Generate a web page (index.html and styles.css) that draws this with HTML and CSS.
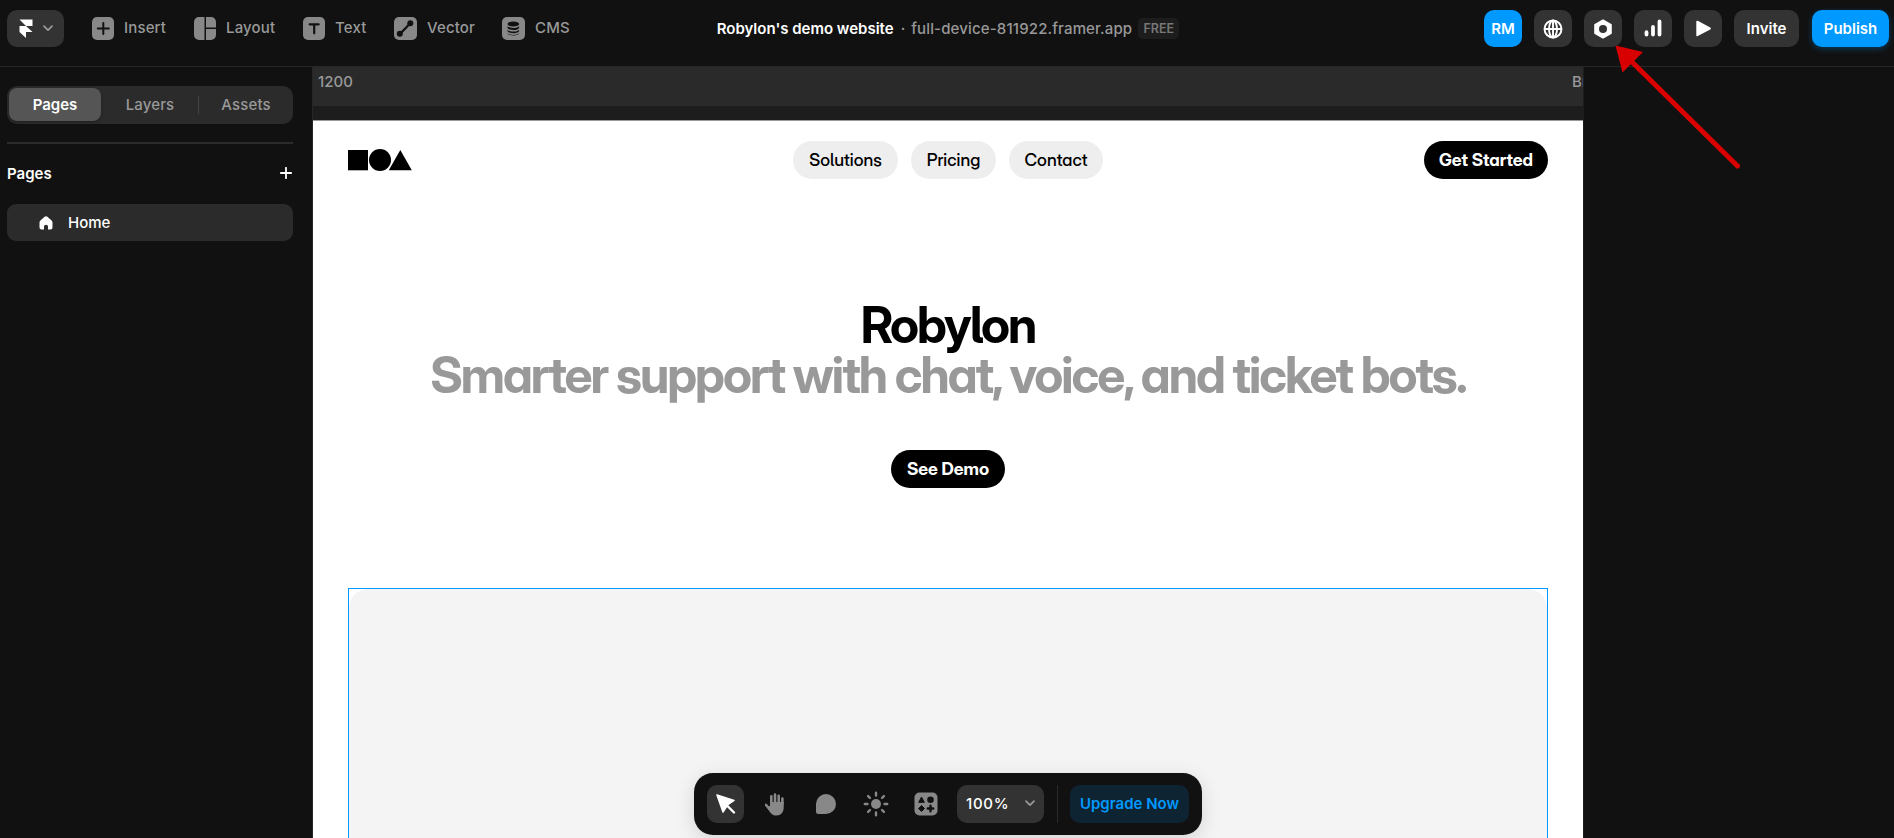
FILE: index.html
```
<!DOCTYPE html>
<html lang="en">
<head>
    <meta charset="UTF-8">
    <meta name="viewport" content="width=device-width, initial-scale=1.0">
    <title>Robylon's demo website</title>
    <link rel="stylesheet" href="styles.css">
</head>
<body>
    <header class="topbar">
        <div class="topbar-left">
            <div class="btn btn-logo">
                <svg width="14" height="20" viewBox="0 0 14 20"><path fill="#fff" d="M0.5 0.5H13.5V7H7zM0.5 7H7L13.5 13H0.5zM0.5 13H7V19z"/></svg>
                <svg width="10" height="7" viewBox="0 0 10 7"><path fill="none" stroke="#999" stroke-width="1.7" stroke-linecap="round" stroke-linejoin="round" d="M1 1.2L5 5.2L9 1.2"/></svg>
            </div>
            <nav class="menu">
                <a class="menu-item menu-insert">
                    <svg width="22" height="23" viewBox="0 0 22 23"><rect width="22" height="23" rx="5" fill="#888"/><path stroke="#111" stroke-width="2" stroke-linecap="round" d="M11.3 6V17M5.8 11.5H16.8"/></svg>
                    <span>Insert</span>
                </a>
                <a class="menu-item menu-layout">
                    <svg width="22" height="23" viewBox="0 0 22 23"><path fill="#888" d="M5 0H10.5V23H5a5 5 0 0 1-5-5V5a5 5 0 0 1 5-5zM12 0H17a5 5 0 0 1 5 5V10.5H12zM12 12H22V18a5 5 0 0 1-5 5H12z"/></svg>
                    <span>Layout</span>
                </a>
                <a class="menu-item menu-text">
                    <svg width="22" height="23" viewBox="0 0 22 23"><rect width="22" height="23" rx="5" fill="#888"/><path stroke="#111" stroke-width="2.2" stroke-linecap="round" d="M6.7 7.3H15.7M11.2 7.3V16.3"/></svg>
                    <span>Text</span>
                </a>
                <a class="menu-item menu-vector">
                    <svg width="23" height="23" viewBox="0 0 23 23"><rect width="23" height="23" rx="5" fill="#888"/><path stroke="#111" stroke-width="2.3" d="M6 17L16 6.5"/><circle cx="5.8" cy="16.8" r="3" fill="#111"/><circle cx="16.3" cy="6.3" r="3" fill="#111"/></svg>
                    <span>Vector</span>
                </a>
                <a class="menu-item menu-cms">
                    <svg width="23" height="23" viewBox="0 0 23 23"><rect width="23" height="23" rx="5" fill="#888"/><ellipse cx="11.3" cy="7" rx="5.8" ry="2.6" fill="#111"/><path fill="#111" d="M5.5 9c1.5 2.7 10.1 2.7 11.6 0v1.5c0 3.4-11.6 3.4-11.6 0zM5.5 12.7c1.5 2.5 10.1 2.5 11.6 0v1c0 3.3-11.6 3.3-11.6 0zM5.5 16c1.5 2.5 10.1 2.5 11.6 0c0 3.3-11.6 3.3-11.6 0z"/></svg>
                    <span>CMS</span>
                </a>
            </nav>
        </div>
        <div class="site-title">
            <span class="site-name">Robylon's demo website</span>
            <span class="dot">·</span>
            <span class="site-url">full-device-811922.framer.app</span>
            <span class="badge">FREE</span>
        </div>
        <div class="topbar-right">
            <div class="btn btn-icon btn-user">RM</div>
            <div class="btn btn-icon">
                <svg width="20" height="20" viewBox="0 0 20 20"><g fill="none" stroke="#fff" stroke-width="1.9"><circle cx="10" cy="10" r="8.5"/><ellipse cx="10" cy="10" rx="4" ry="8.5"/><path d="M10 1.5V18.5M1.5 10H18.5"/></g></svg>
            </div>
            <div class="btn btn-icon">
                <svg width="20" height="20" viewBox="0 0 20 20"><path fill="#fff" stroke="#fff" stroke-width="2" stroke-linejoin="round" d="M10 1.5L17.8 5.8V14.2L10 18.5L2.2 14.2V5.8z"/><circle cx="10" cy="10" r="4" fill="#333"/></svg>
            </div>
            <div class="btn btn-icon">
                <svg width="20" height="20" viewBox="0 0 20 20"><path fill="none" stroke="#fff" stroke-width="3.8" stroke-linecap="round" d="M3.5 13.2V15.5M10 8V15.5M16.5 2.5V15.5"/></svg>
            </div>
            <div class="btn btn-icon">
                <svg width="20" height="20" viewBox="0 0 20 20"><path fill="#fff" stroke="#fff" stroke-width="2" stroke-linejoin="round" d="M4.3 2.7L16.8 9.5L4.3 16.2z"/></svg>
            </div>
            <div class="btn btn-invite">Invite</div>
            <div class="btn btn-publish">Publish</div>
        </div>
    </header>

    <main class="workspace">
        <aside class="sidebar">
            <div class="tabs">
                <span class="tab tab-active">Pages</span>
                <span class="tab tab-layers">Layers</span>
                <span class="tab-sep"></span>
                <span class="tab">Assets</span>
            </div>
            <div class="section-head">
                <span>Pages</span>
                <svg width="12" height="12" viewBox="0 0 12 12"><path stroke="#fff" stroke-width="1.8" stroke-linecap="round" d="M6 0.8V11.2M0.8 6H11.2"/></svg>
            </div>
            <div class="page-item">
                <svg width="14" height="14" viewBox="0 0 14 14"><path fill="#fff" d="M5.6 0.8Q7-0.5 8.4 0.8L12.6 4.5Q13.5 5.3 13.5 6.6V11.5Q13.5 13.5 11.5 13.5H9V10.5Q9 8.8 7 8.8T5 10.5V13.5H2.5Q0.5 13.5 0.5 11.5V6.6Q0.5 5.3 1.4 4.5z"/></svg>
                <span>Home</span>
            </div>
        </aside>

        <section class="canvas">
            <div class="ruler">
                <span>1200</span>
                <span class="breakpoint">Breakpoint</span>
            </div>
            <div class="ruler-gap"></div>
            <div class="site">
                <div class="site-nav">
                    <svg class="site-logo" width="64" height="22" viewBox="0 0 64 22"><path d="M0 1H20V21.3H0z"/><circle cx="32" cy="11" r="11"/><path d="M52.3 1L63.8 21.3H40.8z"/></svg>
                    <div class="site-links">
                        <span class="pill pill-solutions">Solutions</span>
                        <span class="pill pill-pricing">Pricing</span>
                        <span class="pill pill-contact">Contact</span>
                    </div>
                    <span class="pill pill-dark pill-start">Get Started</span>
                </div>
                <div class="hero">
                    <h1>Robylon</h1>
                    <h2>Smarter support with chat, voice, and ticket bots.</h2>
                    <span class="pill pill-dark pill-demo">See Demo</span>
                </div>
                <div class="frame">
                    <div class="frame-inner"></div>
                </div>
            </div>
        </section>

        <aside class="properties"></aside>
    </main>

    <!-- floating toolbar -->
    <div class="toolbar">
        <div class="tool tool-active">
            <svg width="22" height="22" viewBox="0 0 22 22"><path fill="#fff" stroke="#fff" stroke-width="1.5" stroke-linejoin="round" d="M2 2L19 7.5L12.5 12L8 19z"/><path stroke="#fff" stroke-width="2.4" stroke-linecap="round" d="M12.5 13L19 19.5"/></svg>
        </div>
        <div class="tool">
            <svg width="22" height="24" viewBox="0 0 22 24"><g fill="none" stroke="#888" stroke-linecap="round" stroke-width="2.6"><path d="M6.3 12V4.3M10 12V2.5M13.7 12V3.8M17.4 12V6.5M0.9 12.8L5.5 18"/></g><path fill="#888" d="M5 10H18.7V15.5C18.7 20 16 23.5 11.5 23.5C7.5 23.5 6 21.5 4 18.7L1.5 15L5 14z"/></svg>
        </div>
        <div class="tool">
            <svg width="22" height="22" viewBox="0 0 22 22"><path fill="#888" d="M11 1A10 10 0 1 1 11 21H3.2Q1 21 1 18.8V11A10 10 0 0 1 11 1z"/></svg>
        </div>
        <div class="tool">
            <svg width="26" height="26" viewBox="0 0 26 26"><circle cx="13" cy="13" r="5" fill="#888"/><path stroke="#888" stroke-width="2.4" stroke-linecap="round" d="M13 1.8V4.5M13 21.5V24.2M1.8 13H4.5M21.5 13H24.2M5.1 5.1L7 7M19 19L20.9 20.9M5.1 20.9L7 19M19 7L20.9 5.1"/></svg>
        </div>
        <div class="tool">
            <svg width="24" height="24" viewBox="0 0 24 24"><rect x="0.5" y="0.5" width="23" height="23" rx="5" fill="#888"/><path fill="#111" stroke="#111" stroke-linejoin="round" d="M7.5 5L10.3 10.3H4.7zM7.5 13.5L10.5 16.5L7.5 19.5L4.5 16.5z"/><circle cx="16.5" cy="7.8" r="3.3" fill="#111"/><path stroke="#111" stroke-width="2.4" stroke-linecap="round" d="M16.5 13.8V19.2M13.8 16.5H19.2"/></svg>
        </div>
        <div class="zoom">
            <span>100%</span>
            <svg width="10" height="7" viewBox="0 0 10 7"><path fill="none" stroke="#999" stroke-width="1.7" stroke-linecap="round" stroke-linejoin="round" d="M1 1.2L5 5.2L9 1.2"/></svg>
        </div>
        <div class="toolbar-sep"></div>
        <div class="upgrade">Upgrade Now</div>
    </div>

    <!-- arrow pointing at the settings button -->
    <svg class="arrow" width="130" height="130" viewBox="0 0 130 130">
        <path stroke="#d80000" stroke-width="5" stroke-linecap="round" d="M20 20L127.5 126"/>
        <path fill="#d80000" d="M5.5 5.5L33 12L12.5 32.5z"/>
    </svg>
</body>
</html>
```
FILE: styles.css
```
* {
    box-sizing: border-box;
}
body {
    margin: 0;
    height: 838px;
    overflow: hidden;
    display: flex;
    flex-direction: column;
    background-color: #111;
    font-family: Inter, "Liberation Sans", sans-serif;
    font-size: 15px;
    font-weight: 500;
    color: #999;
}
svg {
    display: block;
    flex: none;
}

/* top bar */
.topbar {
    height: 67px;
    flex: none;
    padding: 10px 5px 0 7px;
    border-bottom: 1px solid #262626;
    display: grid;
    grid-template-columns: 1fr auto 1fr;
    align-items: start;
}
.topbar-left, .topbar-right, .menu, .menu-item, .site-title {
    display: flex;
    align-items: center;
}
.topbar-right {
    justify-content: flex-end;
    gap: 12px;
}
.btn {
    height: 37px;
    border-radius: 10px;
    background-color: #333;
    color: #fff;
    font-weight: 600;
    display: flex;
    align-items: center;
    justify-content: center;
}
.btn-logo {
    width: 57px;
    gap: 10px;
}
.btn-icon {
    width: 38px;
}
.btn-user {
    background-color: #09f;
}
.btn-invite {
    width: 65px;
}
.btn-publish {
    width: 77px;
    margin-left: 1px;
    background-color: #09f;
    box-shadow: 0 2px 6px rgba(0, 153, 255, 0.3);
}
.menu {
    margin-left: 28px;
}
.menu-item {
    gap: 10px;
    height: 37px;
}
.menu-item span {
    padding-bottom: 2px;
    letter-spacing: 0.15px;
}
.menu-insert {
    width: 102px;
}
.menu-layout {
    width: 109px;
}
.menu-text {
    width: 91px;
}
.menu-vector {
    width: 108px;
}
.site-title {
    height: 37px;
    white-space: nowrap;
}
.site-name {
    color: #fff;
    font-weight: 600;
}
.dot {
    margin: 0 6px 0 7px;
}
.site-url {
    letter-spacing: 0.15px;
}
.badge {
    margin-left: 6px;
    width: 41px;
    height: 21px;
    line-height: 21px;
    border-radius: 5px;
    background-color: #1d1d1d;
    color: #777;
    font-size: 12.5px;
    font-weight: 600;
    text-align: center;
}

/* left panel */
.workspace {
    flex: 1;
    min-height: 0;
    display: flex;
}
.sidebar {
    width: 313px;
    flex: none;
    padding: 19px 19px 0 7px;
    border-right: 1px solid #262626;
}
.tabs {
    height: 38px;
    padding: 2px 0 3px 2px;
    border-radius: 10px;
    background-color: #2b2b2b;
    display: flex;
    align-items: center;
}
.tab {
    width: 94px;
    text-align: center;
    letter-spacing: 0.15px;
}
.tab-layers {
    width: 97px;
    padding-left: 1px;
}
.tab-active {
    flex: none;
    width: 92px;
    height: 33px;
    line-height: 33px;
    border-radius: 8px;
    background-color: #555;
    color: #fff;
    font-weight: 600;
    letter-spacing: 0;
    box-shadow: 0 1px 3px rgba(0, 0, 0, 0.3);
}
.tab-sep {
    width: 1px;
    height: 18px;
    background-color: #444;
}
.section-head {
    margin-top: 18px;
    padding: 0 1px 2px 0;
    height: 62px;
    border-top: 2px solid #2b2b2b;
    display: flex;
    align-items: center;
    justify-content: space-between;
    color: #fff;
    font-weight: 600;
}
.page-item {
    height: 37px;
    padding-left: 32px;
    border-radius: 9px;
    background-color: #2b2b2b;
    display: flex;
    align-items: center;
    gap: 15px;
    color: #fff;
}

/* canvas */
.canvas {
    width: 1270px;
    flex: none;
    display: flex;
    flex-direction: column;
    overflow: hidden;
}
.ruler {
    height: 39px;
    flex: none;
    padding: 5px 0 0 5px;
    background-color: #2a2a2a;
    display: flex;
    justify-content: space-between;
    overflow: hidden;
}
.breakpoint {
    width: 11px;
    overflow: hidden;
}
.ruler-gap {
    height: 15px;
    flex: none;
    background-color: #1d1d1d;
    border-bottom: 1px solid #999;
}
.site {
    flex: 1;
    min-height: 0;
    padding: 20px 35px 0;
    background-color: #fff;
    color: #000;
    font-family: "Inter Display", Inter, "Liberation Sans", sans-serif;
    font-feature-settings: "cv03", "cv04", "cv09", "cv11", "cv05";
    font-variation-settings: "opsz" 32;
    display: flex;
    flex-direction: column;
}
.site-nav {
    display: grid;
    grid-template-columns: 1fr auto 1fr;
    align-items: center;
}
.site-links {
    display: flex;
    gap: 13px;
}
.pill {
    height: 38px;
    line-height: 38px;
    border-radius: 19px;
    background-color: #eee;
    font-size: 17.5px;
    text-align: center;
    white-space: nowrap;
}
.pill-solutions {
    width: 105px;
}
.pill-pricing {
    width: 85px;
}
.pill-contact {
    width: 94px;
}
.pill-dark {
    background-color: #000;
    color: #fff;
    font-weight: 700;
    letter-spacing: -0.05px;
}
.pill-start {
    width: 124px;
    justify-self: end;
}
.pill-demo {
    width: 114px;
    margin-top: 50px;
}
.hero {
    margin-top: 121px;
    display: flex;
    flex-direction: column;
    align-items: center;
}
.hero h1, .hero h2 {
    margin: 0;
    font-size: 50px;
    line-height: 50px;
    font-weight: 700;
    letter-spacing: -2px;
    white-space: nowrap;
}
.hero h2 {
    color: #999;
}
.frame {
    flex: 1;
    min-height: 0;
    margin-top: 100px;
    border: 1px solid #09f;
    border-bottom: none;
}
.frame-inner {
    height: 100%;
    border-radius: 19px 19px 0 0;
    background-color: #f4f4f4;
}
.properties {
    flex: 1;
    border-left: 1px solid #1d1d1d;
}

/* floating toolbar */
.toolbar {
    position: absolute;
    left: 694px;
    top: 773px;
    width: 508px;
    height: 62px;
    padding: 0 13px;
    border-radius: 19px;
    background-color: #111;
    box-shadow: 0 5px 20px rgba(0, 0, 0, 0.13);
    display: flex;
    align-items: center;
}
.tool {
    width: 37px;
    height: 38px;
    margin-right: 13px;
    border-radius: 10px;
    display: flex;
    align-items: center;
    justify-content: center;
}
.tool-active {
    background-color: #333;
}
.zoom {
    width: 87px;
    height: 38px;
    padding: 0 9px 1px;
    border-radius: 10px;
    background-color: #333;
    color: #fff;
    letter-spacing: 0.7px;
    display: flex;
    align-items: center;
    justify-content: space-between;
}
.toolbar-sep {
    width: 1px;
    height: 38px;
    margin: 0 12px 0 13px;
    background-color: #2b2b2b;
}
.upgrade {
    width: 119px;
    height: 38px;
    line-height: 38px;
    border-radius: 10px;
    background-color: #0e2433;
    color: #09f;
    font-weight: 600;
    text-align: center;
    white-space: nowrap;
}
.arrow {
    position: absolute;
    left: 1610px;
    top: 40px;
}
```
